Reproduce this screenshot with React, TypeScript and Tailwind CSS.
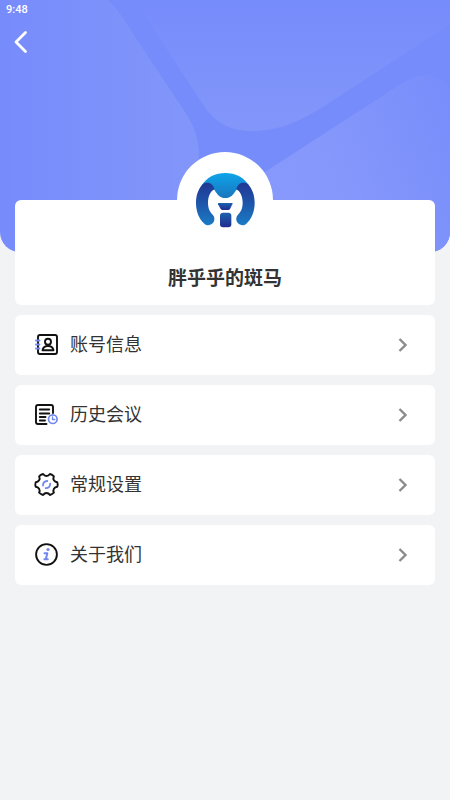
import type { ReactNode } from "react";

function HeaderWaves() {
  return (
    <svg
      className="absolute inset-0 h-full w-full"
      viewBox="0 0 450 252"
      preserveAspectRatio="none"
      aria-hidden="true"
    >
      <defs>
        <linearGradient id="waveLeft" x1="0" y1="0" x2="1" y2="0">
          <stop offset="0" stopColor="#8296fa" stopOpacity="0" />
          <stop offset="1" stopColor="#8296fa" />
        </linearGradient>
        <linearGradient id="waveTop" x1="0" y1="0" x2="0" y2="1">
          <stop offset="0" stopColor="#8296fa" stopOpacity="0" />
          <stop offset="1" stopColor="#8296fa" />
        </linearGradient>
        <linearGradient id="waveRight" x1="0" y1="0.3" x2="1" y2="0">
          <stop offset="0" stopColor="#8799fb" />
          <stop offset="0.4" stopColor="#8698fb" />
          <stop offset="1" stopColor="#788dfb" />
        </linearGradient>
      </defs>
      <path
        d="M0 0H108C118 10 125 20 133 34L187 115C196 130 199 142 199 156V252H0Z"
        fill="url(#waveLeft)"
      />
      <path
        d="M135 0L204 106C215 122 229 131 252 131C280 131 302 120 326 105L450 24V0Z"
        fill="url(#waveTop)"
      />
      <path
        d="M200 214L401 84C411 78 417 75 426 75C438 76 445 82 450 89V252H200Z"
        fill="url(#waveRight)"
      />
    </svg>
  );
}

function Logo() {
  return (
    <svg className="h-full w-full" viewBox="0 0 288 288" aria-hidden="true">
      <defs>
        <linearGradient id="cap" x1="0" y1="0" x2="0" y2="1">
          <stop offset="0" stopColor="#0fa4ea" />
          <stop offset="1" stopColor="#1976bd" />
        </linearGradient>
        <linearGradient id="arm" x1="0" y1="0" x2="0" y2="1">
          <stop offset="0" stopColor="#203894" />
          <stop offset="0.45" stopColor="#1e53a8" />
          <stop offset="1" stopColor="#1b7bc6" />
        </linearGradient>
        <linearGradient id="stem" x1="0" y1="0" x2="0" y2="1">
          <stop offset="0" stopColor="#1b62ae" />
          <stop offset="1" stopColor="#212b8e" />
        </linearGradient>
      </defs>
      <path
        d="M74 100C90 75 115 63 145 63C175 63 200 75 216 100L178 113C168 129 161 138 145 138C129 138 122 129 112 113Z"
        fill="url(#cap)"
      />
      <path
        d="M77 97C86 91 98 91 105 98C109 102 111 106 112 112C100 118 93 134 93 152C93 171 100 180 107 188C113 194 113 202 111 208C107 219 92 224 82 215C66 201 57 178 57 153C57 130 64 111 77 97Z"
        fill="url(#arm)"
      />
      <path
        d="M213 97C204 91 192 91 185 98C181 102 179 106 178 112C190 118 197 134 197 152C197 171 190 180 183 188C177 194 177 202 179 208C183 219 198 224 208 215C224 201 233 178 233 153C233 130 226 111 213 97Z"
        fill="url(#arm)"
      />
      <path
        d="M125 153H166Q168 153 166 157L159 171Q157 174 154 174H136Q133 174 131 171L123 157Q122 153 125 153Z"
        fill="url(#stem)"
      />
      <rect x="129" y="182" width="34" height="44" rx="9" fill="url(#stem)" />
    </svg>
  );
}

function AccountIcon() {
  return (
    <>
      <rect x="3" y="2" width="19" height="19" rx="2" />
      <circle cx="13" cy="8.8" r="3" />
      <path d="M7.5 17.2C8.2 13.8 10 13 13 13S17.8 13.8 18.5 17.2Z" />
      <path d="M1 7.5H4.5M1 11.5H4.5M1 15.5H4.5" stroke="#7188ee" />
    </>
  );
}

function HistoryIcon() {
  return (
    <>
      <path d="M18 10V4Q18 2 16 2H3Q1 2 1 4V19Q1 21 3 21H11.5" />
      <path d="M4.8 6.5H14.2M4.8 10.5H14.2M4.8 14H10.5M4.8 17.5H10" />
      <circle cx="17.8" cy="16.2" r="4.3" stroke="#7188ee" strokeWidth="1.7" />
      <path d="M17.5 13.9V16.5H19.8" stroke="#7188ee" strokeWidth="1.4" />
    </>
  );
}

function SettingsIcon() {
  return (
    <>
      <path d="M8.1 1Q9.4 3 11.5 3Q13.6 3 14.9 1Q17.3 1.7 18.9 3.3Q17.8 5.5 18.9 7.3Q20 9.1 22.3 9.2Q23 11.5 22.3 13.8Q20 13.9 18.9 15.7Q17.8 17.5 18.9 19.7Q17.3 21.3 14.9 22Q13.6 20 11.5 20Q9.4 20 8.1 22Q5.7 21.3 4.1 19.7Q5.2 17.5 4.1 15.7Q3 13.9.7 13.8Q0 11.5.7 9.2Q3 9.1 4.1 7.3Q5.2 5.5 4.1 3.3Q5.7 1.7 8.1 1Z" />
      <path
        d="M8 12.5Q8 8.2 12.3 8M10.7 15.2Q15 15 15.2 10.7"
        stroke="#7188ee"
        strokeWidth="1.8"
      />
    </>
  );
}

function AboutIcon() {
  return (
    <>
      <circle cx="11.5" cy="11.5" r="10.4" />
      <circle cx="13" cy="6.5" r="1.6" fill="#7188ee" stroke="none" />
      <path
        d="M9.5 10.3H12.3L10.8 16.3H12.8M9.4 16.3H10.8"
        stroke="#7188ee"
        strokeWidth="2"
      />
    </>
  );
}

const menuItems: { label: string; icon: ReactNode }[] = [
  { label: "账号信息", icon: <AccountIcon /> },
  { label: "历史会议", icon: <HistoryIcon /> },
  { label: "常规设置", icon: <SettingsIcon /> },
  { label: "关于我们", icon: <AboutIcon /> },
];

export default function App() {
  return (
    <div className="min-h-screen bg-[#f2f3f5] font-['Noto_Sans_CJK_SC',sans-serif] text-[#333333]">
      {/* Header */}
      <header className="relative h-[252px] overflow-hidden rounded-b-[20px] bg-[#778cfb]">
        <HeaderWaves />
        <div className="relative flex flex-col items-start text-white">
          <time className="px-1.5 pt-0.5 font-[Roboto,sans-serif] text-[11px] leading-4 font-medium">
            9:48
          </time>
          <button
            type="button"
            aria-label="返回"
            className="mt-2 ml-2 flex h-8 w-6 cursor-pointer items-center justify-center"
          >
            <svg
              className="h-6 w-4"
              viewBox="0 0 16 24"
              fill="none"
              stroke="currentColor"
              strokeWidth="2.8"
              strokeLinecap="round"
              strokeLinejoin="round"
            >
              <path d="M13.5 2.5L4 12L13.5 21.5" />
            </svg>
          </button>
        </div>
      </header>

      <main className="relative -mt-[52px] flex flex-col gap-2.5 px-[15px] pb-6">
        {/* Profile card */}
        <section className="flex flex-col items-center rounded-md bg-white pb-3.5">
          <div className="-mt-12 h-24 w-24 rounded-full bg-white">
            <Logo />
          </div>
          <h1 className="mt-[15px] text-[19px] leading-7 font-bold">
            胖乎乎的斑马
          </h1>
        </section>

        {/* Menu */}
        {menuItems.map((item) => (
          <button
            key={item.label}
            type="button"
            className="flex h-[60px] w-full cursor-pointer items-center rounded-md bg-white pr-6 pl-5 text-left"
          >
            <svg
              className="h-6 w-6 shrink-0 overflow-visible"
              viewBox="0 0 24 24"
              fill="none"
              stroke="#111111"
              strokeWidth="1.9"
              strokeLinecap="round"
              strokeLinejoin="round"
              aria-hidden="true"
            >
              {item.icon}
            </svg>
            <span className="ml-[11px] flex-1 pb-1 text-[18px] leading-7">
              {item.label}
            </span>
            <svg
              className="h-4 w-4 shrink-0"
              viewBox="0 0 16 16"
              fill="none"
              stroke="#8c8c8c"
              strokeWidth="2.4"
              aria-hidden="true"
            >
              <path d="M4.5 2L10.5 8L4.5 14" />
            </svg>
          </button>
        ))}
      </main>
    </div>
  );
}
